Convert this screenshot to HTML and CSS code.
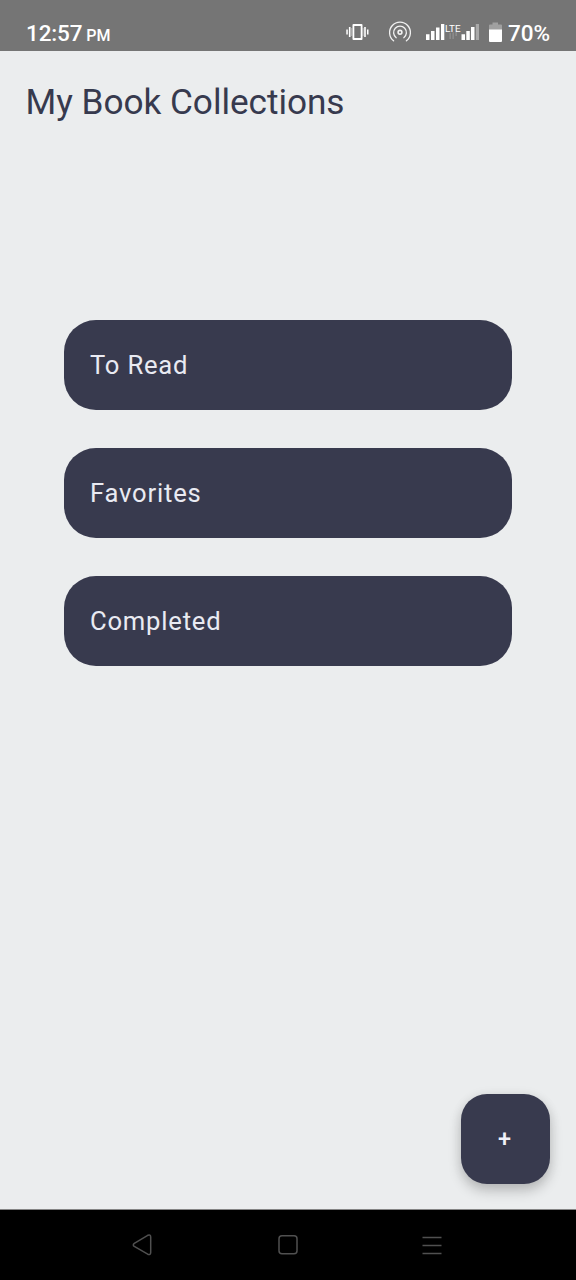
FILE: index.html
```html
<!DOCTYPE html>
<html lang="en">
<head>
<meta charset="utf-8">
<title>My Book Collections</title>
<link rel="stylesheet" href="styles.css">
</head>
<body>
<div class="screen">
  <header class="status">
    <div class="clock"><span class="time">12:57</span><span class="ampm">PM</span></div>
    <svg class="status-icons" width="156" height="26" viewBox="346 20 156 26" aria-hidden="true">
      <g fill="#fff">
        <path d="M346.300 29.500h1.500v5h-1.500zM348.900 27h1.600v10h-1.600zM364.200 27h1.600v10h-1.600zM367 29.500h1.500v5h-1.500z"/>
        <path d="M351.300 28h.8v8h-.8zM362.700 28h.8v8h-.8z" opacity=".5"/>
        <path fill-rule="evenodd" d="M353.500 24h8q1 0 1 1v14q0 1-1 1h-8q-1 0-1-1v-14q0-1 1-1zM354.300 26v12h6.400v-12z"/>
      </g>
      <g fill="none" stroke="#f2f2f2" stroke-width="1.300" stroke-linecap="round">
        <circle cx="400" cy="32.300" r="1.900" stroke-width="1.600"/>
        <path d="M396.200 37.700a6.400 6.400 0 1 1 7.600 0"/>
        <path d="M393.600 40.800a10.400 10.400 0 1 1 12.800 0"/>
      </g>
      <path fill="#fff" d="M426 34.300h3.500v5.700h-3.500zM431 31h3.500v9h-3.500zM436 27.500h3.500v12.500h-3.500zM441 24h3.300v16h-3.300zM461.500 34.300h3.500v5.700h-3.500zM466.300 31h3.500v9h-3.500zM471 27h3.500v13h-3.500z"/>
      <path fill="#a9a9a9" d="M475.800 24h3.200v16h-3.200z"/>
      <path fill="#929292" d="M449.500 33h1.300v6h-1.300zM452.500 32.500h1.300v6.500h-1.300zM455.500 32h1.300v4h-1.300z"/>
      <text class="lte" x="445" y="32" textLength="15.500" lengthAdjust="spacingAndGlyphs">LTE</text>
      <path fill="#a0a0a0" d="M492.500 22.500h5.500v2h3q1 0 1 1v4.500h-13v-4.500q0-1 1-1h2.500z"/>
      <path fill="#fff" d="M489 29.500h13v11.500q0 1-1 1h-11q-1 0-1-1z"/>
    </svg>
    <span class="battery">70%</span>
  </header>
  <main class="content">
    <h1 class="title">My Book Collections</h1>
    <div class="list">
      <button class="collection">To Read</button>
      <button class="collection">Favorites</button>
      <button class="collection">Completed</button>
    </div>
    <button class="fab">+</button>
  </main>
  <nav class="navbar">
    <svg width="22" height="24" viewBox="131 1233 22 24"><path d="M134.300 1243.300L147.700 1235.300Q150.700 1234 150.700 1237V1252.500Q150.700 1255.500 147.700 1254.200L134.300 1246.500Q132.300 1244.900 134.300 1243.300Z"/></svg>
    <svg width="22" height="24" viewBox="277 1233 22 24"><rect x="280" y="1235.800" width="18" height="18" rx="3"/></svg>
    <svg width="22" height="24" viewBox="421 1233 22 24"><path d="M422.500 1237.500h19M422.500 1245.500h19M422.500 1253.500h19"/></svg>
  </nav>
</div>
</body>
</html>
```
FILE: styles.css
```css
* { box-sizing: border-box; }
body { margin: 0; font-family: Roboto, sans-serif; }
button { border: 0; font: inherit; }
.screen {
  display: flex;
  flex-direction: column;
  width: 576px;
  height: 1280px;
  background: #ebedee;
}
.status {
  display: flex;
  height: 51px;
  padding: 20px 26px 0;
  background: #757575;
  color: #fff;
  font-size: 22.500px;
  font-weight: 500;
  line-height: 26px;
}
.clock { flex: 1; letter-spacing: -0.150px; }
.ampm { margin-left: 4px; font-size: 16px; }
.status-icons { flex: none; margin-right: 6px; }
.lte { fill: #fff; font-size: 9.500px; font-weight: 400; }
.battery { width: 42px; white-space: nowrap; }
.content {
  display: flex;
  flex: 1;
  flex-direction: column;
}
.title {
  margin: 31px 25.600px 0;
  color: #373a4e;
  font-size: 35.200px;
  font-weight: 400;
  letter-spacing: -0.040px;
  line-height: 41px;
}
.list {
  display: flex;
  flex-direction: column;
  gap: 38.400px;
  margin: 197px 64px 0;
}
.collection {
  height: 89.600px;
  padding: 0 26px;
  border-radius: 32px;
  background: #383a4e;
  color: #e9eaf2;
  font-size: 25.600px;
  letter-spacing: 0.800px;
  text-align: left;
}
.fab {
  width: 89.600px;
  height: 89.600px;
  margin: auto 25.600px 25.400px auto;
  padding: 0 2px 0 0;
  border-radius: 26px;
  background: #383a4e;
  color: #f0f0f8;
  font-size: 23.500px;
  font-weight: 500;
  box-shadow: 0 7px 13px rgba(0, 0, 0, 0.200), 0 1px 12px rgba(0, 0, 0, 0.070);
}
.navbar {
  display: flex;
  justify-content: space-between;
  height: 71px;
  padding: 23px 133px 0 131px;
  border-top: 1px solid #858585;
  background: #000;
}
.navbar svg {
  fill: none;
  stroke: #505050;
  stroke-width: 1.500;
}
```
